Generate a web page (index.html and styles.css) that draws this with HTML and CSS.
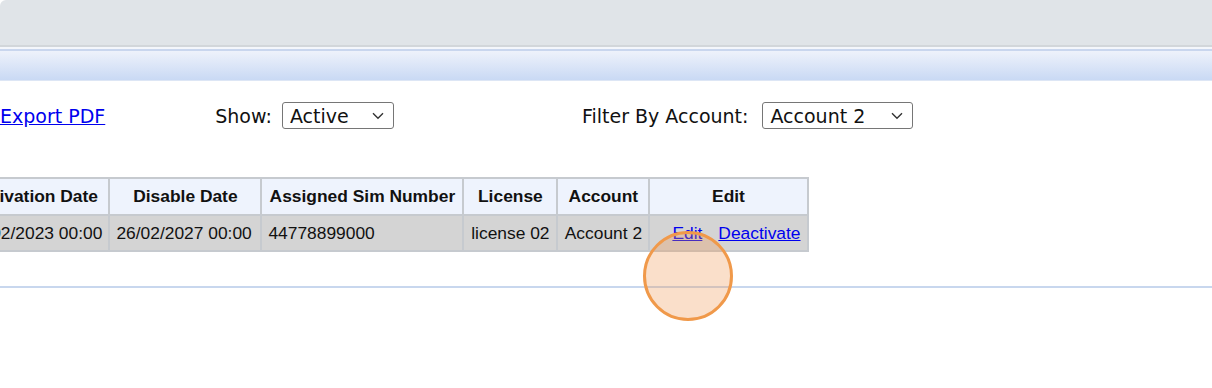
FILE: index.html
```html
<!DOCTYPE html>
<html lang="en">

<head>
    <meta charset="UTF-8" />
    <meta name="viewport" content="width=device-width, initial-scale=1.0" />
    <title>Devices</title>
    <link rel="stylesheet" href="styles.css">
</head>

<body>
    <div class="topbar"></div>
    <div class="subbar"></div>

    <div class="content">
        <div class="toolbar">
            <a href="#" class="export-link">Export PDF</a>

            <label class="filter show-filter">Show:
                <span class="select-wrap select-show">
                    <select>
                        <option>Active</option>
                        <option>Inactive</option>
                        <option>All</option>
                    </select>
                    <svg class="chevron" width="12" height="8" viewBox="0 0 12 8">
                        <path d="M1 1.2 L6 6.2 L11 1.2" fill="none" stroke="#333" stroke-width="1.4" />
                    </svg>
                </span>
            </label>

            <label class="filter account-filter">Filter By Account:
                <span class="select-wrap select-account">
                    <select>
                        <option>Account 1</option>
                        <option selected>Account 2</option>
                    </select>
                    <svg class="chevron" width="12" height="8" viewBox="0 0 12 8">
                        <path d="M1 1.2 L6 6.2 L11 1.2" fill="none" stroke="#333" stroke-width="1.4" />
                    </svg>
                </span>
            </label>
        </div>

        <table class="grid">
            <colgroup>
                <col class="c-act">
                <col class="c-dis">
                <col class="c-sim">
                <col class="c-lic">
                <col class="c-acc">
                <col class="c-edit">
            </colgroup>
            <thead>
                <tr>
                    <th>Activation Date</th>
                    <th>Disable Date</th>
                    <th>Assigned Sim Number</th>
                    <th>License</th>
                    <th>Account</th>
                    <th>Edit</th>
                </tr>
            </thead>
            <tbody>
                <tr>
                    <td>26/02/2023 00:00</td>
                    <td>26/02/2027 00:00</td>
                    <td>44778899000</td>
                    <td class="center">license 02</td>
                    <td class="center">Account 2</td>
                    <td class="actions"><a href="#">Edit</a><a href="#">Deactivate</a></td>
                </tr>
            </tbody>
        </table>

        <div class="divider"></div>

        <!-- click marker -->
        <div class="click-dot"></div>
    </div>
</body>

</html>
```

FILE: styles.css
```css
body {
    margin: 0;
    background-color: #fff;
    font-family: 'DejaVu Sans', Verdana, sans-serif;
}

.topbar {
    height: 45px;
    background-color: #e0e4e8;
    border-bottom: 2px solid #d2d6da;
    border-top-left-radius: 6px;
}

.subbar {
    height: 34px;
    background: linear-gradient(to bottom,
            #f4f6fb 0, #f4f6fb 2px,
            #c9d6ee 2px, #c9d6ee 4px,
            #eef2fb 4px, #c9d9f4 33px,
            #dde6f5 33px, #dde6f5 34px);
}

.content {
    position: relative;
    padding-top: 21px;
    min-height: 307px;
    box-sizing: border-box;
    overflow: hidden;
}

/* filters row */
.toolbar {
    display: flex;
    align-items: center;
    height: 27px;
    font-size: 19px;
    color: #111;
}

.export-link {
    color: #0000ee;
    text-decoration: underline;
}

.filter {
    display: flex;
    align-items: center;
    gap: 10px;
}

.show-filter {
    margin-left: 110px;
}

.account-filter {
    margin-left: 188px;
    gap: 14px;
}

.select-wrap {
    position: relative;
    display: inline-block;
}

.select-wrap select {
    appearance: none;
    -webkit-appearance: none;
    height: 27px;
    padding: 0 0 0 7px;
    border: 1px solid #767676;
    border-radius: 3px;
    background: #fff;
    color: #111;
    font-family: 'DejaVu Sans', Verdana, sans-serif;
    font-size: 19px;
    box-sizing: border-box;
}

.select-show select {
    width: 112px;
}

.select-account select {
    width: 151px;
}

.chevron {
    position: absolute;
    right: 10px;
    top: 10px;
    pointer-events: none;
}

/* devices table */
.grid {
    margin-top: 48px;
    margin-left: -41px;
    border-collapse: collapse;
    table-layout: fixed;
    font-family: 'Liberation Sans', Arial, sans-serif;
    font-size: 17.4px;
    color: #111;
}

.c-act {
    width: 149px;
}

.c-dis {
    width: 152px;
}

.c-sim {
    width: 202px;
}

.c-lic {
    width: 94px;
}

.c-acc {
    width: 92px;
}

.c-edit {
    width: 158px;
}

.grid th,
.grid td {
    border: 2px solid #c6cacf;
    padding: 0 6px;
    white-space: nowrap;
    overflow: hidden;
}

.grid th {
    height: 35px;
    background-color: #eef3fd;
    font-weight: bold;
    text-align: center;
}

.grid td {
    height: 34px;
    background-color: #d4d4d4;
    text-align: left;
}

.grid td.center {
    text-align: center;
}

.grid td.actions {
    padding-left: 22px;
}

.actions a {
    color: #0000ee;
    margin-right: 16px;
}

.actions a:last-child {
    margin-right: 0;
}

.divider {
    margin-top: 34px;
    height: 2px;
    background-color: #c8d7ee;
}

.click-dot {
    position: absolute;
    left: 643px;
    top: 150px;
    width: 84px;
    height: 84px;
    border: 3px solid #f0994a;
    border-radius: 50%;
    background-color: rgba(240, 150, 80, 0.3);
}
```
